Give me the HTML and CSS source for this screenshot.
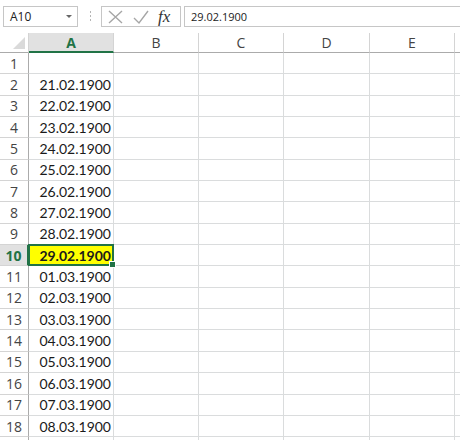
FILE: index.html
```html
<!DOCTYPE html>
<html>
<head>
<meta charset="utf-8">
<link rel="stylesheet" href="styles.css">
</head>
<body>
<div class="app">
  <div class="toolbar">
    <div class="namebox"><span class="nb-text">A10</span><span class="nb-arrow"></span></div>
    <div class="sep"><i></i><i></i><i></i></div>
    <div class="fbuttons">
      <svg class="ico" width="20" height="16" viewBox="0 0 20 16"><path d="M3 2 L16 14 M16 2 L3 14" stroke="#a6a6a6" stroke-width="1.4" fill="none"/></svg>
      <svg class="ico" width="20" height="16" viewBox="0 0 20 16"><path d="M3 9 L8 14 L17 2" stroke="#a6a6a6" stroke-width="1.4" fill="none"/></svg>
      <span class="fx">fx</span>
    </div>
    <div class="formula">29.02.1900</div>
  </div>
  <div class="sheet">
    <div class="corner"><span class="tri"></span></div>
    <div class="ch sel">A</div><div class="ch">B</div><div class="ch">C</div><div class="ch">D</div><div class="ch">E</div><div class="ch last"></div>

    <div class="rh">1</div><div class="c"></div><div class="c"></div><div class="c"></div><div class="c"></div><div class="c"></div><div class="c last"></div>
    <div class="rh">2</div><div class="c">21.02.1900</div><div class="c"></div><div class="c"></div><div class="c"></div><div class="c"></div><div class="c last"></div>
    <div class="rh">3</div><div class="c">22.02.1900</div><div class="c"></div><div class="c"></div><div class="c"></div><div class="c"></div><div class="c last"></div>
    <div class="rh">4</div><div class="c">23.02.1900</div><div class="c"></div><div class="c"></div><div class="c"></div><div class="c"></div><div class="c last"></div>
    <div class="rh">5</div><div class="c">24.02.1900</div><div class="c"></div><div class="c"></div><div class="c"></div><div class="c"></div><div class="c last"></div>
    <div class="rh">6</div><div class="c">25.02.1900</div><div class="c"></div><div class="c"></div><div class="c"></div><div class="c"></div><div class="c last"></div>
    <div class="rh">7</div><div class="c">26.02.1900</div><div class="c"></div><div class="c"></div><div class="c"></div><div class="c"></div><div class="c last"></div>
    <div class="rh">8</div><div class="c">27.02.1900</div><div class="c"></div><div class="c"></div><div class="c"></div><div class="c"></div><div class="c last"></div>
    <div class="rh">9</div><div class="c">28.02.1900</div><div class="c"></div><div class="c"></div><div class="c"></div><div class="c"></div><div class="c last"></div>
    <div class="rh sel">10</div><div class="c active">29.02.1900<span class="handle"></span></div><div class="c"></div><div class="c"></div><div class="c"></div><div class="c"></div><div class="c last"></div>
    <div class="rh">11</div><div class="c">01.03.1900</div><div class="c"></div><div class="c"></div><div class="c"></div><div class="c"></div><div class="c last"></div>
    <div class="rh">12</div><div class="c">02.03.1900</div><div class="c"></div><div class="c"></div><div class="c"></div><div class="c"></div><div class="c last"></div>
    <div class="rh">13</div><div class="c">03.03.1900</div><div class="c"></div><div class="c"></div><div class="c"></div><div class="c"></div><div class="c last"></div>
    <div class="rh">14</div><div class="c">04.03.1900</div><div class="c"></div><div class="c"></div><div class="c"></div><div class="c"></div><div class="c last"></div>
    <div class="rh">15</div><div class="c">05.03.1900</div><div class="c"></div><div class="c"></div><div class="c"></div><div class="c"></div><div class="c last"></div>
    <div class="rh">16</div><div class="c">06.03.1900</div><div class="c"></div><div class="c"></div><div class="c"></div><div class="c"></div><div class="c last"></div>
    <div class="rh">17</div><div class="c">07.03.1900</div><div class="c"></div><div class="c"></div><div class="c"></div><div class="c"></div><div class="c last"></div>
    <div class="rh">18</div><div class="c">08.03.1900</div><div class="c"></div><div class="c"></div><div class="c"></div><div class="c"></div><div class="c last"></div>
    <div class="rh"></div><div class="c"></div><div class="c"></div><div class="c"></div><div class="c"></div><div class="c"></div><div class="c last"></div>
  </div>
</div>
</body>
</html>
```
FILE: styles.css
```css
html, body { margin: 0; padding: 0; background: #ffffff; }
body { width: 460px; height: 440px; overflow: hidden; font-family: "Open Sans", "Noto Sans", sans-serif; }
.app { display: flex; flex-direction: column; }
.toolbar { height: 33px; display: flex; align-items: flex-start; padding-top: 6px; box-sizing: border-box; }
.namebox { margin-left: 3px; width: 75px; height: 21px; box-sizing: border-box; border: 1px solid #c6c6c6; display: flex; align-items: center; justify-content: space-between; padding: 0 5px 0 6px; }
.nb-text { font-size: 12px; color: #222; font-family: "Open Sans", sans-serif; }
.nb-arrow { width: 0; height: 0; border-left: 3px solid transparent; border-right: 3px solid transparent; border-top: 3px solid #666; }
.sep { width: 20px; display: flex; flex-direction: column; align-items: center; gap: 2px; padding-top: 5px; margin-left: 2px; }
.sep i { display: block; width: 1px; height: 2px; background: #b5b5b5; }
.fbuttons { margin-left: 1px; width: 80px; height: 21px; box-sizing: border-box; border: 1px solid #c6c6c6; display: flex; align-items: center; padding-left: 4px; gap: 5px; }
.fx { font-family: "Liberation Serif", serif; font-style: italic; font-size: 17px; color: #333; margin-left: 2px; line-height: 1; }
.formula { margin-left: 3px; flex: 1; height: 21px; box-sizing: border-box; border: 1px solid #c6c6c6; border-right: none; font-size: 11px; color: #222; padding-left: 6px; line-height: 19px; }
.sheet { display: grid; grid-template-columns: 29px 85px 85px 85px 86px 85px 5px; grid-template-rows: 20px repeat(19, 21.35px); }
.corner { position: relative; border-right: 1px solid #d4d4d4; border-bottom: 1px solid #ababab; box-sizing: border-box; }
.tri { position: absolute; right: 3px; bottom: 3px; width: 0; height: 0; border-left: 12px solid transparent; border-bottom: 12px solid #dadada; }
.ch { box-sizing: border-box; border-right: 1px solid #d4d4d4; border-bottom: 1px solid #ababab; display: flex; align-items: center; justify-content: center; font-size: 14px; color: #444; }
.ch.sel { background: #e1e1e1; border-bottom: 2px solid #217346; color: #217346; font-weight: 700; }
.ch.last { border-right: none; }
.rh { box-sizing: border-box; border-right: 1px solid #ababab; border-bottom: 1px solid #d4d4d4; display: flex; align-items: center; justify-content: center; font-size: 14px; color: #444; }
.rh.sel { background: #e1e1e1; border-right: 2px solid #217346; color: #217346; font-weight: 700; }
.c { box-sizing: border-box; border-right: 1px solid #dadcdd; border-bottom: 1px solid #dadcdd; font-family: "Lato", sans-serif; font-size: 14px; color: #1a1a1a; display: flex; align-items: center; justify-content: flex-end; padding-right: 2px; }
.c.last { border-right: none; }
.c.active { background: #ffff00; font-weight: 700; border: 2px solid #217346; position: relative; margin: -1px 0 0 -1px; padding-right: 1px; }
.handle { position: absolute; right: -4px; bottom: -4px; width: 5px; height: 5px; background: #217346; border: 1px solid #fff; }
```
